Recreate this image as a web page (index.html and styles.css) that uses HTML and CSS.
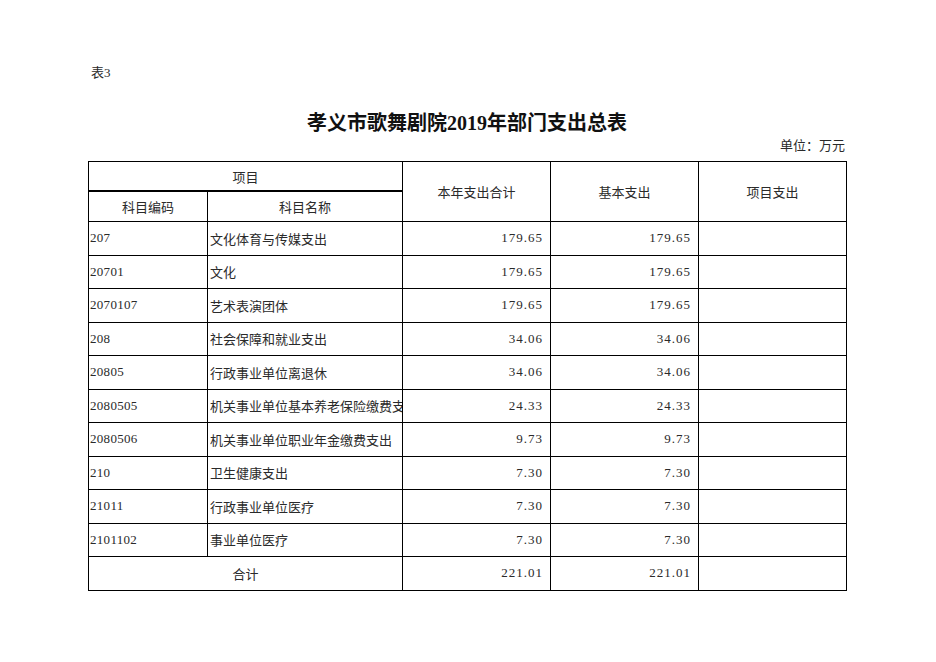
FILE: index.html
```
<!DOCTYPE html>
<html lang="zh">
<head>
<meta charset="utf-8">
<title>孝义市歌舞剧院2019年部门支出总表</title>
<link rel="stylesheet" href="styles.css">
</head>
<body>
<div class="page">
  <div class="tag">表3</div>
  <h1 class="title">孝义市歌舞剧院2019年部门支出总表</h1>
  <div class="unit">单位：万元</div>
  <table class="sheet">
    <colgroup>
      <col class="c1"><col class="c2"><col class="c3"><col class="c4"><col class="c5">
    </colgroup>
    <thead>
      <tr class="h1">
        <th colspan="2" class="thick">项目</th>
        <th rowspan="2">本年支出合计</th>
        <th rowspan="2">基本支出</th>
        <th rowspan="2">项目支出</th>
      </tr>
      <tr class="h2">
        <th>科目编码</th>
        <th>科目名称</th>
      </tr>
    </thead>
    <tbody>
      <tr><td class="code">207</td><td class="name"><div class="clip">文化体育与传媒支出</div></td><td class="num">179.65</td><td class="num">179.65</td><td></td></tr>
      <tr><td class="code">20701</td><td class="name"><div class="clip">文化</div></td><td class="num">179.65</td><td class="num">179.65</td><td></td></tr>
      <tr><td class="code">2070107</td><td class="name"><div class="clip">艺术表演团体</div></td><td class="num">179.65</td><td class="num">179.65</td><td></td></tr>
      <tr><td class="code">208</td><td class="name"><div class="clip">社会保障和就业支出</div></td><td class="num">34.06</td><td class="num">34.06</td><td></td></tr>
      <tr><td class="code">20805</td><td class="name"><div class="clip">行政事业单位离退休</div></td><td class="num">34.06</td><td class="num">34.06</td><td></td></tr>
      <tr><td class="code">2080505</td><td class="name"><div class="clip">机关事业单位基本养老保险缴费支出</div></td><td class="num">24.33</td><td class="num">24.33</td><td></td></tr>
      <tr><td class="code">2080506</td><td class="name"><div class="clip">机关事业单位职业年金缴费支出</div></td><td class="num">9.73</td><td class="num">9.73</td><td></td></tr>
      <tr><td class="code">210</td><td class="name"><div class="clip">卫生健康支出</div></td><td class="num">7.30</td><td class="num">7.30</td><td></td></tr>
      <tr><td class="code">21011</td><td class="name"><div class="clip">行政事业单位医疗</div></td><td class="num">7.30</td><td class="num">7.30</td><td></td></tr>
      <tr><td class="code">2101102</td><td class="name"><div class="clip">事业单位医疗</div></td><td class="num">7.30</td><td class="num">7.30</td><td></td></tr>
      <tr class="total"><td colspan="2" class="center">合计</td><td class="num">221.01</td><td class="num">221.01</td><td></td></tr>
    </tbody>
  </table>
</div>
</body>
</html>
```
FILE: styles.css
```
html, body {
  margin: 0;
  padding: 0;
  background: #ffffff;
}
body {
  font-family: "Liberation Serif", "Noto Sans CJK SC", serif;
  color: #2a2a2a;
  font-size: 13px;
}
.page {
  padding: 64px 0 0 88px;
  width: 758px;
}
.tag {
  height: 18px;
  line-height: 18px;
  padding-left: 3px;
  font-size: 13px;
}
.title {
  margin: 27px 0 0 0;
  height: 28px;
  line-height: 28px;
  font-size: 20px;
  font-weight: bold;
  text-align: center;
  color: #111111;
}
.unit {
  height: 18px;
  line-height: 18px;
  text-align: right;
  padding-right: 1px;
  margin-top: 0;
  font-size: 13px;
}
.sheet {
  margin-top: 6px;
  border-collapse: collapse;
  table-layout: fixed;
  width: 759px;
}
.c1 { width: 119px; }
.c2 { width: 195px; }
.c3 { width: 148px; }
.c4 { width: 148px; }
.c5 { width: 148px; }
.sheet th, .sheet td {
  border: 1px solid #000000;
  padding: 0;
  font-weight: normal;
  font-size: 13px;
  white-space: nowrap;
  overflow: hidden;
}
.sheet th {
  text-align: center;
  vertical-align: middle;
}
.h1 th { height: 28px; }
.h1 th.thick { border-bottom: 2px solid #000000; }
.h2 th { height: 29px; }
.sheet tbody td {
  height: 32.5px;
  vertical-align: middle;
}
.code {
  text-align: left;
  padding-left: 1px !important;
  letter-spacing: 0.3px;
}
.name {
  text-align: left;
  padding-left: 2px !important;
}
.clip {
  overflow: hidden;
  white-space: nowrap;
}
.num {
  text-align: right;
  padding-right: 7px !important;
  letter-spacing: 1px;
}
.center {
  text-align: center;
}
```
